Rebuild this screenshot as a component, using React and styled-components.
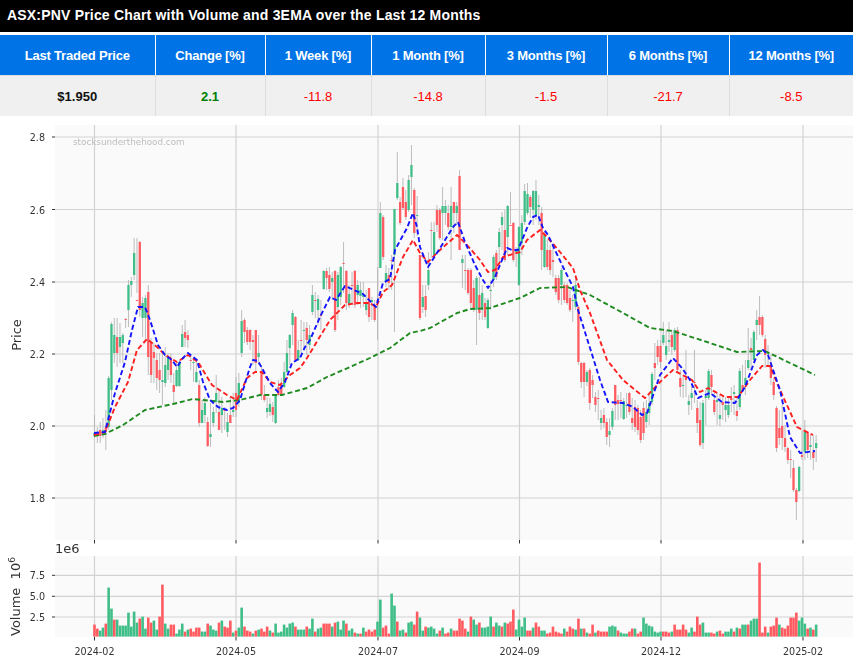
import React from "react"
import styled, {createGlobalStyle} from "styled-components"

const GlobalStyle = createGlobalStyle`
  html, body {
    margin: 0;
    padding: 0;
    background: #fff;
    overflow: hidden;
  }
`

const Page = styled.div`
  width: 853px;
  height: 662px;
  font-family: "Liberation Sans", Arial, sans-serif;
`

const Title = styled.h1`
  height: 32px;
  margin: 0 0 3px;
  padding: 0 7px;
  background: #000;
  color: #fff;
  font-size: 14px;
  font-weight: 700;
  letter-spacing: 0.19px;
  line-height: 31px;
`

const StatsTable = styled.table`
  width: 853px;
  height: 81px;
  border-collapse: collapse;
  table-layout: fixed;
`

const HeadCell = styled.th`
  height: 40px;
  padding: 0;
  background: #0073e6;
  border-left: 1px solid #fff;
  border-bottom: 1px solid #ddd;
  color: #fff;
  font-size: 13px;
  font-weight: 700;
  letter-spacing: -0.2px;
  text-align: center;
  &:first-child {
    border-left: 0;
  }
`

const ValueCell = styled.td`
  height: 40px;
  padding: 0;
  background: #f0f0f0;
  border-left: 1px solid #ddd;
  color: ${props => props.$color};
  font-size: 13px;
  font-weight: ${props => props.$strong ? 700 : 400};
  text-align: center;
  &:first-child {
    border-left: 0;
  }
`

const ChartSvg = styled.svg`
  display: block;
  margin-top: 4px;
  filter: blur(0.3px);
`

const TickLabel = styled.text`
  font-family: "DejaVu Sans", sans-serif;
  font-size: 9.6px;
  fill: #333;
`

const AxisLabel = styled.text`
  font-family: "DejaVu Sans", sans-serif;
  font-size: 13px;
  fill: #333;
`

const Watermark = styled.text`
  font-family: "DejaVu Sans", sans-serif;
  font-size: 8.8px;
  fill: #bdbdbd;
`

const columns = [
  {label: "Last Traded Price", value: "$1.950", width: 155, color: "#111", strong: true},
  {label: "Change [%]", value: "2.1", width: 110, color: "#008000", strong: true},
  {label: "1 Week [%]", value: "-11.8", width: 106, color: "#ff0000"},
  {label: "1 Month [%]", value: "-14.8", width: 114, color: "#ff0000"},
  {label: "3 Months [%]", value: "-1.5", width: 122, color: "#ff0000"},
  {label: "6 Months [%]", value: "-21.7", width: 122, color: "#ff0000"},
  {label: "12 Months [%]", value: "-8.5", width: 124, color: "#ff0000"},
]

// chart coordinates are page pixels, the svg sits 120px down the page
const TOP = 120
const STEP = 2.83
const barX = i => 94.5 + i * STEP

const GREEN = "#3fbe88"
const RED = "#ff5b60"

// [index, colour, body top, body bottom, wick top, wick bottom]
const candles = [
  [0,"g",433,436,415,438],[1,"g",434,436,427,443],[2,"r",430,436,422,443],[3,"g",430,433,418,438],
  [4,"r",427,432,410,450],[5,"g",378,427,376,430],[6,"g",324,390,322,400],[7,"g",335,353,318,363],
  [8,"r",337,353,318,367],[9,"g",337,347,323,363],[10,"g",335,343,333,363],[11,"r",319,320,318,328],
  [12,"g",285,310,280,327],[13,"g",281,285,277,297],[14,"g",253,275,238,280],[15,"r",300,301,238,293],
  [16,"r",242,310,241,317],[17,"g",303,318,297,337],[18,"g",298,318,295,340],[19,"r",292,357,285,375],
  [20,"r",342,375,338,383],[21,"r",352,358,343,383],[22,"r",360,378,353,390],[23,"r",370,380,353,393],
  [24,"g",380,382,353,405],[25,"g",365,383,347,387],[26,"g",358,370,353,380],[27,"r",358,375,353,383],
  [28,"r",385,392,373,403],[29,"g",370,386,363,387],[30,"g",362,386,360,387],[31,"g",334,347,325,347],
  [32,"r",332,338,320,347],[33,"r",335,340,330,348],[34,"r",360,361,355,370],[35,"g",362,363,358,382],
  [36,"g",372,382,360,383],[37,"r",385,423,380,427],[38,"g",410,423,400,423],[39,"g",403,415,397,423],
  [40,"r",422,446,417,447],[41,"g",434,437,403,447],[42,"g",412,423,407,427],[43,"g",393,402,375,413],
  [44,"r",412,430,390,430],[45,"g",408,415,397,433],[46,"r",410,411,407,430],[47,"g",422,432,413,437],
  [48,"r",415,423,397,423],[49,"g",410,412,393,417],[50,"r",393,410,377,417],[51,"g",383,403,373,407],
  [52,"g",321,353,310,357],[53,"r",320,332,318,343],[54,"r",330,342,327,345],[55,"r",330,342,329,350],
  [56,"r",340,342,335,365],[57,"r",330,363,330,372],[58,"g",353,357,335,365],[59,"r",372,395,365,400],
  [60,"r",395,400,385,402],[61,"g",408,412,397,418],[62,"g",404,412,398,416],[63,"r",407,415,402,422],
  [64,"g",395,423,394,424],[65,"r",387,395,380,396],[66,"r",385,395,378,396],[67,"g",372,387,362,388],
  [68,"g",353,372,340,373],[69,"g",335,348,334,365],[70,"g",313,325,310,345],[71,"r",317,360,316,362],
  [72,"g",350,360,340,361],[73,"r",340,341,320,355],[74,"g",330,331,322,350],[75,"r",328,340,322,355],
  [76,"g",335,345,325,350],[77,"g",295,312,285,315],[78,"r",300,301,292,318],[79,"g",299,310,295,325],
  [80,"r",315,316,300,330],[81,"g",271,289,270,290],[82,"r",271,278,268,290],[83,"r",275,289,267,292],
  [84,"g",278,282,272,300],[85,"r",271,330,270,332],[86,"g",275,307,272,320],[87,"g",267,297,266,305],
  [88,"r",263,264,242,293],[89,"r",271,303,270,310],[90,"g",294,305,285,308],[91,"r",285,286,272,305],
  [92,"r",271,305,270,308],[93,"g",285,295,280,305],[94,"g",290,296,282,308],[95,"g",295,297,282,307],
  [96,"g",303,310,290,315],[97,"r",288,317,288,322],[98,"g",300,302,297,320],[99,"r",305,320,300,322],
  [100,"r",300,301,267,340],[101,"g",213,268,202,268],[102,"r",217,257,215,260],[103,"g",273,282,265,287],
  [104,"r",275,283,268,290],[105,"r",260,261,255,290],[106,"g",209,255,209,332],[107,"g",183,198,152,200],
  [108,"r",202,223,197,225],[109,"r",187,208,178,210],[110,"r",202,217,190,220],[111,"g",180,210,175,212],
  [112,"g",165,177,145,205],[113,"r",190,233,188,238],[114,"g",215,216,196,236],[115,"r",255,318,255,320],
  [116,"g",297,307,285,313],[117,"r",296,310,285,317],[118,"g",270,285,252,290],[119,"r",230,231,222,258],
  [120,"g",232,255,222,258],[121,"r",210,225,205,232],[122,"r",210,238,208,240],[123,"g",206,213,187,240],
  [124,"g",206,213,200,225],[125,"r",213,227,205,230],[126,"g",206,227,187,260],[127,"r",202,213,202,233],
  [128,"g",206,213,202,225],[129,"r",176,250,170,250],[130,"g",259,263,255,288],[131,"r",270,271,255,290],
  [132,"r",270,293,268,295],[133,"r",270,303,268,310],[134,"r",288,308,280,312],[135,"g",278,310,276,345],
  [136,"r",295,313,277,320],[137,"g",293,310,285,320],[138,"r",303,317,298,320],[139,"g",300,328,298,329],
  [140,"g",290,291,280,310],[141,"g",257,280,255,287],[142,"r",253,277,250,280],[143,"g",232,247,228,262],
  [144,"g",217,225,212,250],[145,"r",230,260,210,262],[146,"g",206,237,205,255],[147,"r",225,226,192,224],
  [148,"r",223,260,222,262],[149,"g",250,252,247,267],[150,"g",227,285,226,286],[151,"g",223,243,215,255],
  [152,"g",191,222,184,225],[153,"g",194,213,183,215],[154,"r",197,207,195,218],[155,"g",191,210,190,225],
  [156,"g",191,215,180,220],[157,"g",205,207,195,225],[158,"r",213,250,207,270],[159,"g",235,267,232,268],
  [160,"r",250,267,240,270],[161,"r",250,270,245,275],[162,"r",260,262,243,277],[163,"r",278,292,275,295],
  [164,"r",278,300,275,303],[165,"g",270,285,268,305],[166,"r",285,300,282,303],[167,"r",285,303,283,305],
  [168,"r",298,310,290,312],[169,"g",300,301,295,322],[170,"g",285,307,275,310],[171,"r",307,362,305,365],
  [172,"r",363,382,362,388],[173,"r",363,382,362,397],[174,"g",372,382,370,386],[175,"r",370,403,368,410],
  [176,"r",380,385,375,398],[177,"r",397,405,392,412],[178,"r",398,399,390,420],[179,"g",418,423,410,430],
  [180,"r",415,423,408,428],[181,"r",422,437,418,445],[182,"g",431,435,418,447],[183,"g",411,427,408,430],
  [184,"r",385,405,385,420],[185,"r",400,404,395,420],[186,"r",400,401,392,418],[187,"g",401,419,398,420],
  [188,"g",405,406,393,418],[189,"r",393,412,392,415],[190,"r",418,423,398,430],[191,"r",407,427,400,432],
  [192,"r",408,430,405,435],[193,"r",417,440,410,443],[194,"r",408,433,402,440],[195,"g",412,422,400,428],
  [196,"g",403,413,395,425],[197,"g",374,402,372,405],[198,"r",363,368,343,380],[199,"r",346,357,340,365],
  [200,"r",346,362,340,368],[201,"g",335,343,322,345],[202,"g",346,355,330,360],[203,"g",340,342,322,352],
  [204,"r",335,347,330,355],[205,"g",330,350,328,352],[206,"r",330,370,327,372],[207,"r",378,387,370,397],
  [208,"g",385,386,375,398],[209,"r",378,380,350,397],[210,"g",401,405,395,415],[211,"g",393,398,385,410],
  [212,"r",382,383,350,403],[213,"r",408,423,400,433],[214,"r",420,445,402,447],[215,"g",403,443,400,449],
  [216,"g",396,398,390,425],[217,"g",371,398,369,400],[218,"r",375,387,370,395],[219,"r",400,412,392,415],
  [220,"g",400,402,392,425],[221,"g",415,419,395,426],[222,"r",402,405,395,420],[223,"g",405,410,397,422],
  [224,"g",405,415,397,418],[225,"r",398,400,387,412],[226,"g",392,394,385,415],[227,"r",411,416,397,421],
  [228,"g",371,407,368,410],[229,"r",385,390,365,392],[230,"g",378,385,360,395],[231,"g",360,368,328,370],
  [232,"r",348,350,338,370],[233,"g",332,360,330,362],[234,"g",320,325,310,340],[235,"r",317,325,296,335],
  [236,"r",317,335,315,337],[237,"r",339,355,335,368],[238,"g",352,354,345,365],[239,"r",365,378,355,385],
  [240,"r",382,395,378,400],[241,"r",408,448,406,452],[242,"r",428,438,410,445],[243,"r",426,438,405,450],
  [244,"r",438,447,425,452],[245,"r",448,460,447,464],[246,"r",459,460,450,478],[247,"r",468,490,460,492],
  [248,"r",490,502,488,520],[249,"g",467,491,466,492],[250,"r",455,457,430,460],[251,"g",432,452,420,460],
  [252,"r",432,450,431,458],[253,"g",445,447,435,460],[254,"r",452,458,435,470],[255,"g",443,448,435,462],
]

// bar height in px above the baseline, minus sign marks a red bar
const volumes = [
  -12,-8,6,9,-13,49,28,-17,17,11,11,11,24,10,25,14,-18,20,8,-19,-14,16,7,-20,-52,13,8,-12,-12,3,7,13,
  -5,7,-8,-5,-9,-9,5,5,-13,11,7,6,-14,16,-10,-9,-16,4,-6,9,29,-10,-6,-5,3,-6,7,-8,-5,-10,6,-4,13,4,5,
  12,9,13,14,-10,7,7,7,-10,8,18,-5,8,9,-13,-13,-13,10,-14,15,7,16,-13,6,8,-4,3,-3,9,-5,-7,-5,-7,15,37,
  -9,-11,-3,43,31,-15,6,7,-4,14,15,-12,-25,19,6,-10,9,10,8,3,-6,9,-3,-4,8,-6,-6,-18,-16,-8,5,-20,17,12,
  -14,9,9,10,20,-10,14,11,-10,14,-13,-15,-27,7,17,10,19,-6,-6,9,-14,-10,6,6,-3,-4,-10,-5,-4,-3,8,-5,
  -10,-8,7,-18,8,-8,4,-3,-12,4,-6,-5,-5,-5,10,11,10,-6,4,3,3,-5,-8,8,-3,-5,19,13,11,10,5,4,5,-5,-5,-4,
  5,-12,-7,-7,-12,-7,4,9,-5,-20,-12,14,4,4,-4,-3,5,-6,-3,5,5,8,-5,9,-8,12,12,-12,16,18,18,-74,-4,-10,4,-10,
  -11,-19,12,-9,-8,-11,-19,-19,-24,16,19,13,-8,9,-7,12,
]

const blueLine = [
  [94,433],[105,432],[108,420],[115,393],[125,362],[132,330],[138,307],[145,307],[150,320],[158,345],[165,355],
  [172,360],[177,367],[183,358],[188,353],[197,360],[203,382],[210,400],[218,407],[227,410],[233,408],[240,400],
  [250,367],[253,360],[258,361],[263,370],[270,383],[278,392],[285,382],[292,363],[300,358],[305,347],[310,340],
  [320,317],[330,297],[336,300],[345,286],[363,294],[376,307],[383,283],[390,279],[395,250],[407,228],[413,213],
  [417,227],[420,247],[428,267],[442,245],[453,227],[458,222],[465,242],[475,265],[483,280],[488,288],[495,277],
  [507,248],[512,250],[518,250],[527,228],[533,217],[538,215],[543,228],[548,235],[563,267],[573,287],[578,310],
  [590,348],[600,380],[608,402],[623,403],[633,407],[642,415],[647,413],[660,375],[673,358],[682,368],[690,380],
  [698,398],[710,393],[722,402],[735,403],[745,387],[757,355],[763,350],[768,355],[780,390],[790,437],[800,453],
  [815,451],
]

const redLine = [
  [94,435],[105,432],[115,407],[128,382],[137,350],[147,339],[157,347],[165,355],[177,362],[188,355],[198,362],
  [212,385],[227,395],[237,400],[247,378],[255,372],[262,372],[270,382],[280,385],[290,375],[300,368],[307,358],
  [330,320],[345,305],[357,303],[370,303],[376,307],[383,292],[392,285],[403,257],[413,240],[420,253],[428,262],
  [440,250],[457,235],[467,245],[480,260],[488,272],[495,270],[503,257],[520,252],[527,240],[540,230],[547,237],
  [560,252],[573,268],[580,290],[590,313],[607,360],[623,380],[645,398],[662,380],[673,370],[692,380],[700,392],
  [708,388],[725,397],[738,397],[750,380],[762,366],[770,366],[780,390],[797,427],[813,435],
]

const greenLine = [
  [94,436],[105,434],[123,425],[145,410],[173,404],[193,399],[223,402],[240,400],[260,395],[282,395],[307,388],
  [327,377],[350,367],[370,358],[390,348],[410,333],[420,331],[430,328],[457,313],[470,309],[490,308],[520,298],
  [540,288],[567,287],[590,295],[623,313],[650,328],[673,331],[707,342],[737,352],[765,351],[790,363],[815,375],
]

const priceTicks = [["2.8",137],["2.6",209.5],["2.4",282],["2.2",354],["2.0",426],["1.8",498]]
const volumeTicks = [["7.5",575.3],["5.0",596.3],["2.5",617]]
const dateTicks = [
  ["2024-02",94.5],["2024-05",236],["2024-07",378],["2024-09",519.5],["2024-12",661],["2025-02",803],
]

const Grid = ({yTicks, top, bottom}) => (
  <g stroke="#d2d2d2" strokeWidth="1.2">
    {yTicks.map(([label, y]) => (
      <line key={label} x1="55" x2="853" y1={y - TOP} y2={y - TOP}/>
    ))}
    {dateTicks.map(([label, x]) => (
      <line key={label} x1={x} x2={x} y1={top - TOP} y2={bottom - TOP}/>
    ))}
  </g>
)

const TickMarks = ({yTicks, bottom}) => (
  <g stroke="#333" strokeWidth="1">
    {yTicks.map(([label, y]) => (
      <line key={label} x1="52" x2="55" y1={y - TOP} y2={y - TOP}/>
    ))}
    {dateTicks.map(([label, x]) => (
      <line key={label} x1={x} x2={x} y1={bottom - TOP} y2={bottom - TOP + 3.5}/>
    ))}
  </g>
)

const Ema = ({points, color}) => (
  <polyline
    points={points.map(([x, y]) => `${x},${y - TOP}`).join(" ")}
    fill="none"
    stroke={color}
    strokeWidth="1.9"
    strokeLinejoin="round"
    strokeDasharray="5 2.8"
  />
)

const PricePanel = () => (
  <g>
    <rect x="55" y={125 - TOP} width="798" height="415" fill="#fafafa"/>
    <Grid yTicks={priceTicks} top={125} bottom={540}/>
    <TickMarks yTicks={priceTicks} bottom={540}/>
    {priceTicks.map(([label, y]) => (
      <TickLabel key={label} x="45" y={y - TOP + 4} textAnchor="end">{label}</TickLabel>
    ))}
    <Watermark x="73" y={145 - TOP}>stocksunderthehood.com</Watermark>
    <AxisLabel transform={`translate(21 ${335 - TOP}) rotate(-90)`} textAnchor="middle">Price</AxisLabel>
    {candles.map(([i, color, bodyTop, bodyBottom, wickTop, wickBottom]) => (
      <g key={i}>
        <line x1={barX(i)} x2={barX(i)} y1={wickTop - TOP} y2={wickBottom - TOP} stroke="#b5b5b5" strokeWidth="0.9"/>
        <rect
          x={barX(i) - 1.15}
          y={bodyTop - TOP}
          width="2.3"
          height={bodyBottom - bodyTop}
          fill={color === "g" ? GREEN : RED}
        />
      </g>
    ))}
    <Ema points={greenLine} color="#1f8a1f"/>
    <Ema points={redLine} color="#ff1f1f"/>
    <Ema points={blueLine} color="#1414ff"/>
  </g>
)

const VolumePanel = () => (
  <g>
    <rect x="55" y={556 - TOP} width="798" height="81" fill="#fafafa"/>
    <Grid yTicks={volumeTicks} top={556} bottom={637}/>
    <TickMarks yTicks={volumeTicks} bottom={637}/>
    {volumeTicks.map(([label, y]) => (
      <TickLabel key={label} x="45" y={y - TOP + 4} textAnchor="end">{label}</TickLabel>
    ))}
    {volumes.map((v, i) => (
      <rect
        key={i}
        x={barX(i) - 1.3}
        y={636.6 - TOP - Math.abs(v)}
        width="2.6"
        height={Math.abs(v)}
        fill={v < 0 ? RED : GREEN}
      />
    ))}
    <AxisLabel x="55" y={553 - TOP}>1e6</AxisLabel>
    <AxisLabel transform={`translate(20 ${636 - TOP}) rotate(-90)`}>
      Volume{"\u00a0\u00a0"}10<tspan dy="-5" fontSize="9">6</tspan>
    </AxisLabel>
    {dateTicks.map(([label, x]) => (
      <TickLabel key={label} x={x} y={655 - TOP} textAnchor="middle">{label}</TickLabel>
    ))}
  </g>
)

const App = () => (
  <Page>
    <GlobalStyle/>
    <Title>ASX:PNV Price Chart with Volume and 3EMA over the Last 12 Months</Title>
    <StatsTable>
      <colgroup>
        {columns.map(col => <col key={col.label} width={col.width}/>)}
      </colgroup>
      <thead>
        <tr>
          {columns.map(col => <HeadCell key={col.label}>{col.label}</HeadCell>)}
        </tr>
      </thead>
      <tbody>
        <tr>
          {columns.map(col => (
            <ValueCell key={col.label} $color={col.color} $strong={col.strong}>{col.value}</ValueCell>
          ))}
        </tr>
      </tbody>
    </StatsTable>
    <ChartSvg width="853" height="542" viewBox="0 0 853 542">
      <PricePanel/>
      <VolumePanel/>
    </ChartSvg>
  </Page>
)

export default App
